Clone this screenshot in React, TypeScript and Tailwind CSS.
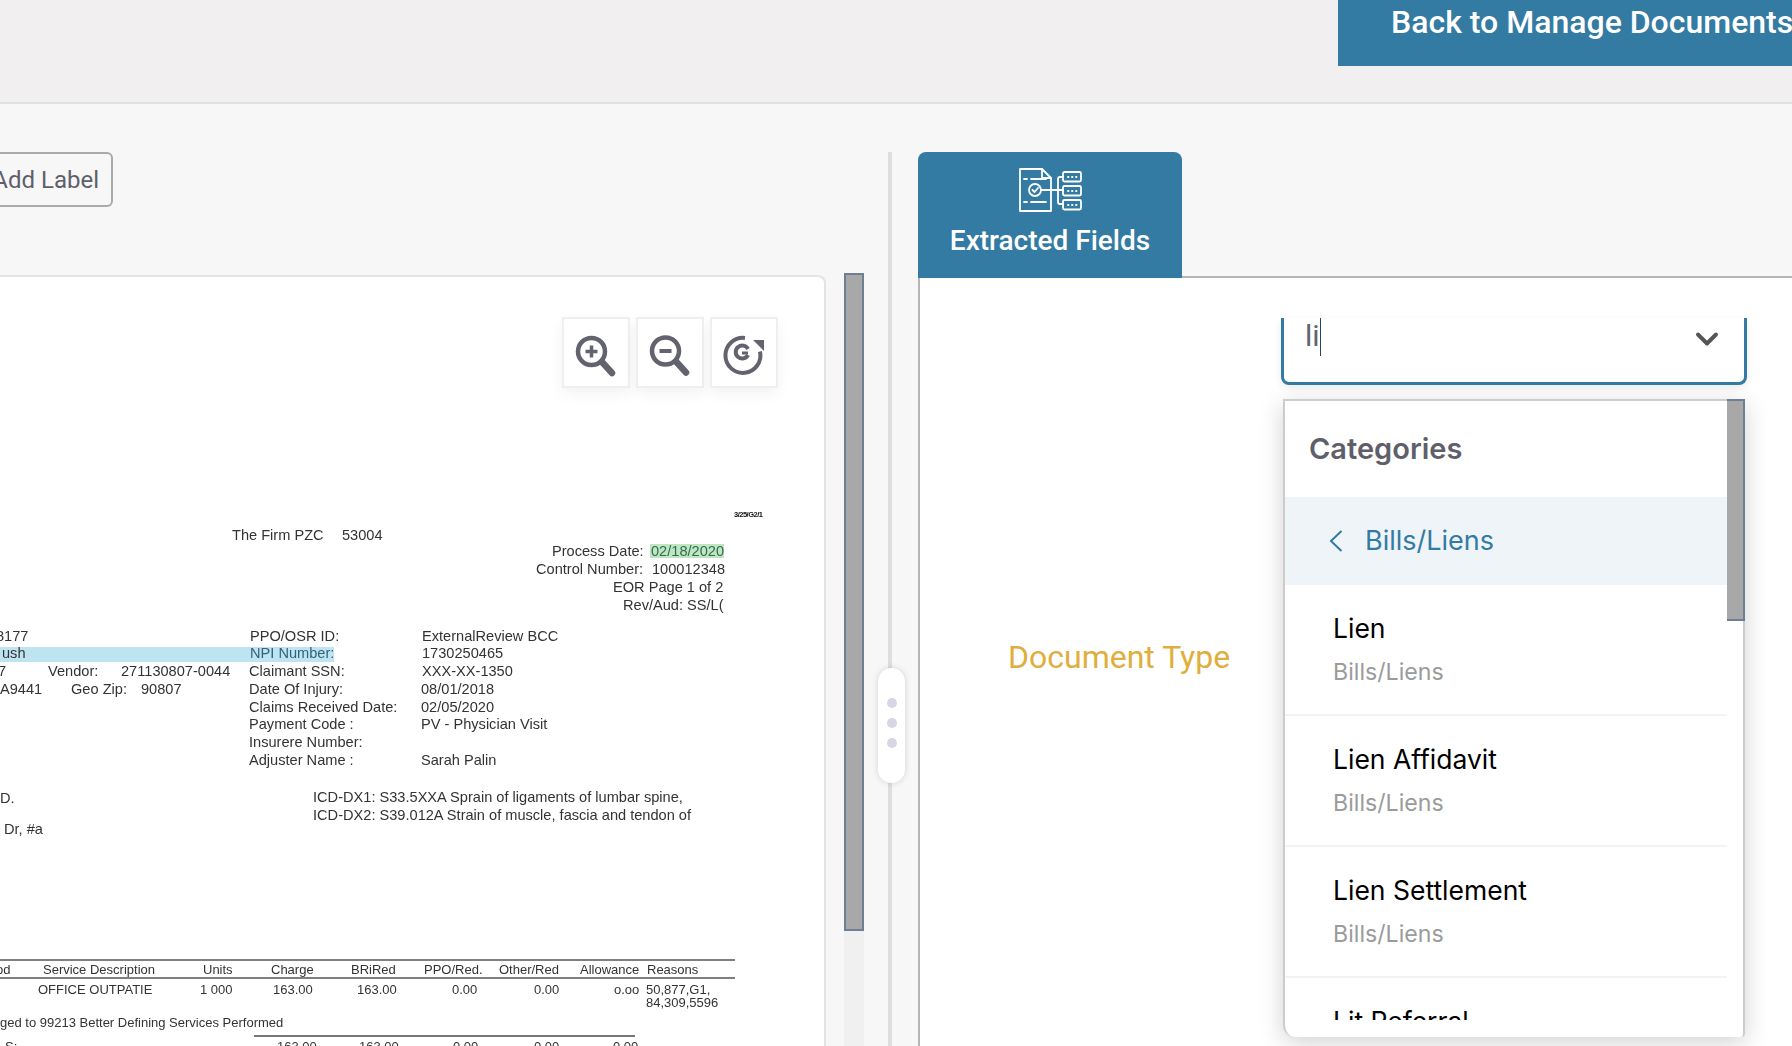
import React from "react";
import { ChevronDown } from "lucide-react";

const roboto = "font-['Roboto',sans-serif]";
const inter = "font-['Inter',sans-serif]";

function T({ c, children }: { c: string; children: React.ReactNode }) {
  return <span className={`absolute whitespace-pre leading-[16px] ${c}`}>{children}</span>;
}

function ZoomButton({ children }: { children: React.ReactNode }) {
  return (
    <button className="w-[68px] h-[71px] bg-white border-2 border-[#efefef] shadow-[0_6px_14px_rgba(0,0,0,0.05)]">
      <svg viewBox="0 0 64 67" className="w-[64px] h-[67px] text-[#63636f]" fill="none" stroke="currentColor">
        {children}
      </svg>
    </button>
  );
}

function ExtractIcon() {
  return (
    <svg viewBox="0 0 64 44" className="w-[64px] h-[44px]" fill="none" stroke="white" strokeWidth="1.8" strokeLinejoin="round" strokeLinecap="round">
      <path d="M2 1h22l9 9v33H2z" />
      <path d="M24 1v9h9" />
      <path d="M6 11h3M13 11h15M6 34h3M13 34h15" />
      <circle cx="17" cy="22" r="6" />
      <path d="M14.5 22l2 2 3.500-4" />
      <path d="M23 22h22M45 9h-3a2 2 0 0 0-2 2v23a2 2 0 0 0 2 2h3" />
      <rect x="45" y="4" width="18" height="9.500" rx="1.500" />
      <rect x="45" y="18" width="18" height="9.500" rx="1.500" />
      <rect x="45" y="32" width="18" height="9.500" rx="1.500" />
      <path d="M50 9h.5M54 9h.5M58 9h.5M50 23h.5M54 23h.5M58 23h.5M50 37h.5M54 37h.5M58 37h.5" />
    </svg>
  );
}

function ScannedPage() {
  return (
    <div className="absolute inset-0 blur-[0.55px] font-['Liberation_Sans',sans-serif] text-[14.6px] text-[#333]">
      <T c="left-[734px] top-[230px] text-[7.500px] font-bold tracking-[-0.5px] text-[#111]">3/25/G2/1</T>
      <T c="left-[232px] top-[250px]">The Firm PZC</T>
      <T c="left-[342px] top-[250px]">53004</T>
      <T c="left-[552px] top-[266px]">Process Date:</T>
      <div className="absolute left-[650px] top-[267px] w-[74px] h-[14px] bg-[#bfe5c4]" />
      <T c="left-[651px] top-[266px] text-[#2f6f4a]">02/18/2020</T>
      <T c="left-[536px] top-[284px]">Control Number:</T>
      <T c="left-[652px] top-[284px]">100012348</T>
      <T c="left-[613px] top-[302px]">EOR Page 1 of 2</T>
      <T c="left-[623px] top-[320px]">Rev/Aud: SS/L(</T>

      <div className="absolute left-0 top-[370px] w-[334px] h-[15px] bg-[#bfe4f1]" />
      <T c="left-[-4px] top-[351px]">8177</T>
      <T c="left-[2px] top-[368px]">ush</T>
      <T c="left-[-2px] top-[386px]">7</T>
      <T c="left-[48px] top-[386px]">Vendor:</T>
      <T c="left-[121px] top-[386px]">271130807-0044</T>
      <T c="left-0 top-[404px]">A9441</T>
      <T c="left-[71px] top-[404px]">Geo Zip:</T>
      <T c="left-[141px] top-[404px]">90807</T>

      <T c="left-[250px] top-[351px]">PPO/OSR ID:</T>
      <T c="left-[250px] top-[368px] text-[#33607a]">NPI Number:</T>
      <T c="left-[249px] top-[386px]">Claimant SSN:</T>
      <T c="left-[249px] top-[404px]">Date Of Injury:</T>
      <T c="left-[249px] top-[422px]">Claims Received Date:</T>
      <T c="left-[249px] top-[439px]">Payment Code :</T>
      <T c="left-[249px] top-[457px]">Insurere Number:</T>
      <T c="left-[249px] top-[475px]">Adjuster Name :</T>

      <T c="left-[422px] top-[351px]">ExternalReview BCC</T>
      <T c="left-[422px] top-[368px]">1730250465</T>
      <T c="left-[422px] top-[386px]">XXX-XX-1350</T>
      <T c="left-[421px] top-[404px]">08/01/2018</T>
      <T c="left-[421px] top-[422px]">02/05/2020</T>
      <T c="left-[421px] top-[439px]">PV - Physician Visit</T>
      <T c="left-[421px] top-[475px]">Sarah Palin</T>

      <T c="left-0 top-[513px]">D.</T>
      <T c="left-[4px] top-[544px]">Dr, #a</T>
      <T c="left-[313px] top-[512px]">ICD-DX1: S33.5XXA Sprain of ligaments of lumbar spine,</T>
      <T c="left-[313px] top-[530px]">ICD-DX2: S39.012A Strain of muscle, fascia and tendon of</T>

      <div className="text-[13px]">
        <div className="absolute left-0 top-[682px] w-[735px] h-[2px] bg-[#808080]" />
        <T c="left-[-4px] top-[685px]">od</T>
        <T c="left-[43px] top-[685px]">Service Description</T>
        <T c="left-[203px] top-[685px]">Units</T>
        <T c="left-[271px] top-[685px]">Charge</T>
        <T c="left-[351px] top-[685px]">BRiRed</T>
        <T c="left-[424px] top-[685px]">PPO/Red.</T>
        <T c="left-[499px] top-[685px]">Other/Red</T>
        <T c="left-[580px] top-[685px]">Allowance</T>
        <T c="left-[647px] top-[685px]">Reasons</T>
        <div className="absolute left-0 top-[700px] w-[735px] h-[2px] bg-[#808080]" />
        <T c="left-[38px] top-[705px]">OFFICE OUTPATIE</T>
        <T c="left-[200px] top-[705px]">1 000</T>
        <T c="left-[273px] top-[705px]">163.00</T>
        <T c="left-[357px] top-[705px]">163.00</T>
        <T c="left-[452px] top-[705px]">0.00</T>
        <T c="left-[534px] top-[705px]">0.00</T>
        <T c="left-[614px] top-[705px]">o.oo</T>
        <T c="left-[646px] top-[705px]">50,877,G1,</T>
        <T c="left-[646px] top-[718px]">84,309,5596</T>
        <T c="left-0 top-[738px]">ged to 99213 Better Defining Services Performed</T>
        <div className="absolute left-[254px] top-[758px] w-[381px] h-[2px] bg-[#777]" />
        <T c="left-[5px] top-[762px]">S:</T>
        <T c="left-[277px] top-[762px]">163.00</T>
        <T c="left-[359px] top-[762px]">163.00</T>
        <T c="left-[453px] top-[762px]">0.00</T>
        <T c="left-[534px] top-[762px]">0.00</T>
        <T c="left-[613px] top-[762px]">0.00</T>
      </div>
    </div>
  );
}

const options = ["Lien", "Lien Affidavit", "Lien Settlement", "Lit Referral"];

export default function App() {
  return (
    <div className={`h-[1046px] w-full overflow-hidden bg-[#f7f7f7] flex flex-col ${roboto}`}>
      {/* Header */}
      <header className="h-[104px] shrink-0 bg-[#f1eff0] border-b-2 border-[#e0e0e0] flex justify-end items-start">
        <div className="w-[454px] h-[66px] bg-[#337ba3] text-white text-[32px] font-medium leading-[44px] pl-[53px] whitespace-nowrap overflow-hidden">
          Back to Manage Documents
        </div>
      </header>

      <main className="flex-1 flex min-h-0">
        {/* Document viewer */}
        <section className="w-[888px] shrink-0 flex flex-col pt-[48px]">
          <div className="h-[55px] w-[113px] shrink-0 border-2 border-l-0 border-[#aaaaaa] rounded-r-[6px] flex items-center justify-end pr-[12px] text-[24px] text-[#5f5f6b]">
            <span className="whitespace-nowrap">Add Label</span>
          </div>
          <div className="flex-1 min-h-0 mt-[66px] flex items-stretch">
            <div className="w-[826px] mt-[2px] relative bg-white border-t-2 border-r-2 border-[#e4e4e4] rounded-tr-[8px] overflow-hidden">
              <ScannedPage />
              <div className="absolute top-[40px] right-[46px] flex gap-[6px]">
                <ZoomButton>
                  <circle cx="27.500" cy="32.500" r="13.500" strokeWidth="4.500" />
                  <path d="M27.500 26.500v12M21.500 32.500h12" strokeWidth="3.500" />
                  <path d="M38 43l10 11" strokeWidth="6.500" strokeLinecap="round" />
                </ZoomButton>
                <ZoomButton>
                  <circle cx="27.500" cy="32" r="13.500" strokeWidth="4.500" />
                  <path d="M21.500 32h12" strokeWidth="4" />
                  <path d="M38 42.500l10 11" strokeWidth="6.500" strokeLinecap="round" />
                </ZoomButton>
                <ZoomButton>
                  <path d="M33 19A17.500 17.500 0 1 0 48 32.500" strokeWidth="4" />
                  <path d="M41 21h11v11z" fill="currentColor" stroke="none" />
                  <path d="M36 36a6.500 6.500 0 1 1 0-6" strokeWidth="4" />
                  <path d="M30 34h6" strokeWidth="3" />
                </ZoomButton>
              </div>
            </div>
            <div className="ml-[18px] w-[20px] bg-[#f0f0f0]">
              <div className="h-[658px] bg-[#a8a8a8] border-2 border-[#6f7f93]" />
            </div>
          </div>
        </section>

        {/* Splitter */}
        <div className="w-[4px] shrink-0 mt-[48px] bg-[#dedede] relative">
          <div className="absolute left-[-10px] top-[516px] w-[27px] h-[115px] pb-[5px] rounded-full bg-white shadow-[0_0_6px_rgba(0,0,0,0.15)] flex flex-col items-center justify-center gap-[10px]">
            <span className="w-[10px] h-[10px] rounded-full bg-[#d8d6e4]" />
            <span className="w-[10px] h-[10px] rounded-full bg-[#d8d6e4]" />
            <span className="w-[10px] h-[10px] rounded-full bg-[#d8d6e4]" />
          </div>
        </div>

        {/* Extracted fields */}
        <section className="flex-1 min-w-0 ml-[26px] pt-[48px] flex flex-col">
          <div className="relative z-10 w-[264px] h-[126px] shrink-0 bg-[#337ba3] rounded-t-[8px] flex flex-col items-center pt-[16px] text-white">
            <ExtractIcon />
            <span className="mt-[13px] text-[28px] font-medium leading-[32px] whitespace-nowrap">Extracted Fields</span>
          </div>
          <div className="flex-1 -mt-[2px] bg-white border-t-2 border-l-2 border-[#b5b5ba] flex">
            <div className="w-[361px] shrink-0 pl-[88px] pt-[360px] text-[32px] leading-[38px] text-[#dfae3c] whitespace-nowrap">
              Document Type
            </div>
            <div className="w-[466px] pt-[40px] relative">
              <div className="h-[67px] border-x-[3px] border-b-[3px] border-[#337ba3] rounded-b-[8px] bg-white shadow-[0_3px_8px_rgba(0,0,0,0.08)] flex items-start justify-between pl-[21px] pr-[19px]">
                <div className="flex items-start">
                  <span className="text-[30px] leading-[36px] text-[#63636f]">li</span>
                  <span className="w-[1.500px] h-[38px] bg-[#33405a]" />
                </div>
                <ChevronDown className="w-[36px] h-[36px] mt-[3px] text-[#555]" strokeWidth={2.6} />
              </div>
              {/* Dropdown menu */}
              <div className={`absolute left-[2px] top-[121px] w-[462px] h-[638px] bg-white border-2 border-b-0 border-[#cccccc] rounded-bl-[12px] rounded-br-[4px] shadow-[0_6px_24px_rgba(0,0,0,0.18)] flex items-start ${inter}`}>
                <div className="flex-1 min-w-0 h-[619px] overflow-hidden">
                  <div className="h-[96px] pl-[24px] pt-[30px] text-[29px] leading-[36px] font-semibold text-[#5f5f6b]">Categories</div>
                  <div className="h-[88px] bg-[#eff4f8] flex items-center pl-[44px] text-[#337ba3]">
                    <svg viewBox="0 0 14 22" className="w-[14px] h-[22px]" fill="none" stroke="currentColor" strokeWidth="2">
                      <path d="M12.500 1L2 11l10.500 10" />
                    </svg>
                    <span className="ml-[22px] text-[27px]">Bills/Liens</span>
                  </div>
                  {options.map((name) => (
                    <div key={name} className="h-[131px] border-b-2 border-[#f3f3f3] pl-[48px] pt-[25px]">
                      <div className="text-[26.500px] leading-[36px] text-black">{name}</div>
                      <div className="mt-[8px] text-[23.200px] leading-[36px] text-[#9b9b9b]">Bills/Liens</div>
                    </div>
                  ))}
                </div>
                <div className="w-[18px] h-[222px] shrink-0 -mt-[2px] -mr-[2px] bg-[#a8a8a8] border-t-2 border-b-2 border-r-2 border-[#6f7f93]" />
              </div>
            </div>
          </div>
        </section>
      </main>
    </div>
  );
}
